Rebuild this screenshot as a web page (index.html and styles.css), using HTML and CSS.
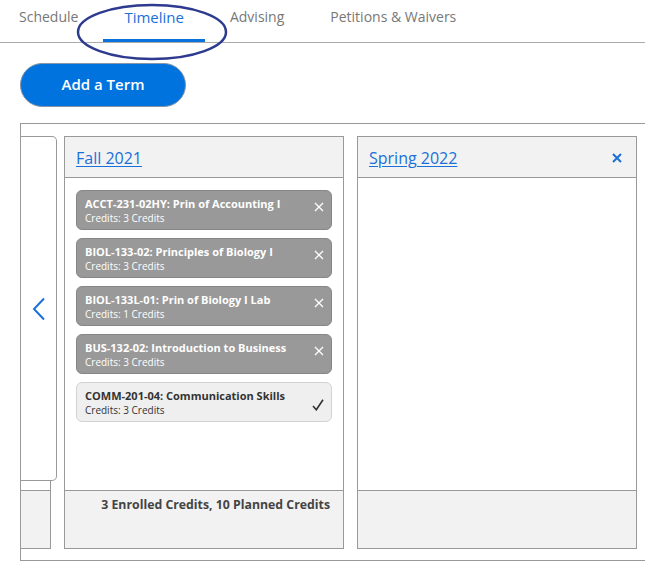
FILE: index.html
```html
<!DOCTYPE html>
<html lang="en">
<head>
    <meta charset="UTF-8">
    <meta name="viewport" content="width=device-width, initial-scale=1.0">
    <title>Timeline</title>
    <link rel="stylesheet" href="styles.css">
</head>
<body>

    <nav class="tabs">
        <a class="tab">Schedule</a>
        <a class="tab active">Timeline</a>
        <a class="tab">Advising</a>
        <a class="tab">Petitions &amp; Waivers</a>
    </nav>

    <!-- hand drawn circle around the active tab -->
    <svg class="mark" width="152" height="58" viewBox="0 0 152 58">
        <ellipse cx="76" cy="29" rx="74" ry="27" fill="none" stroke="#2d3a8f" stroke-width="2.5"/>
    </svg>

    <div class="content">
        <button class="add-term">Add a Term</button>

        <div class="timeline">
            <button class="prev-nav" aria-label="Previous term">
                <svg width="14" height="24" viewBox="0 0 14 24">
                    <path d="M12 1.5 L2 12 L12 22.5" fill="none" stroke="#1a70d9" stroke-width="2"/>
                </svg>
            </button>

            <div class="track">
                <section class="term">
                    <header class="term-head"></header>
                    <div class="term-body"></div>
                    <footer class="term-foot"></footer>
                </section>

                <section class="term">
                    <header class="term-head">
                        <a class="term-link">Fall 2021</a>
                    </header>
                    <div class="term-body">
                        <div class="course planned">
                            <div class="course-text">
                                <p class="course-title">ACCT-231-02HY: Prin of Accounting I</p>
                                <p class="course-credits">Credits: 3 Credits</p>
                            </div>
                            <svg class="course-x" width="10" height="10" viewBox="0 0 10 10"><path d="M1 1 L9 9 M9 1 L1 9" stroke="#fff" stroke-width="1.3"/></svg>
                        </div>
                        <div class="course planned">
                            <div class="course-text">
                                <p class="course-title">BIOL-133-02: Principles of Biology I</p>
                                <p class="course-credits">Credits: 3 Credits</p>
                            </div>
                            <svg class="course-x" width="10" height="10" viewBox="0 0 10 10"><path d="M1 1 L9 9 M9 1 L1 9" stroke="#fff" stroke-width="1.3"/></svg>
                        </div>
                        <div class="course planned">
                            <div class="course-text">
                                <p class="course-title">BIOL-133L-01: Prin of Biology I Lab</p>
                                <p class="course-credits">Credits: 1 Credits</p>
                            </div>
                            <svg class="course-x" width="10" height="10" viewBox="0 0 10 10"><path d="M1 1 L9 9 M9 1 L1 9" stroke="#fff" stroke-width="1.3"/></svg>
                        </div>
                        <div class="course planned">
                            <div class="course-text">
                                <p class="course-title">BUS-132-02: Introduction to Business</p>
                                <p class="course-credits">Credits: 3 Credits</p>
                            </div>
                            <svg class="course-x" width="10" height="10" viewBox="0 0 10 10"><path d="M1 1 L9 9 M9 1 L1 9" stroke="#fff" stroke-width="1.3"/></svg>
                        </div>
                        <div class="course enrolled">
                            <div class="course-text">
                                <p class="course-title">COMM-201-04: Communication Skills</p>
                                <p class="course-credits">Credits: 3 Credits</p>
                            </div>
                            <svg class="course-check" width="12" height="12" viewBox="0 0 12 12"><path d="M1 7 L4.3 10.8 L11 0.8" fill="none" stroke="#333" stroke-width="1.6"/></svg>
                        </div>
                    </div>
                    <footer class="term-foot">3 Enrolled Credits, 10 Planned Credits</footer>
                </section>

                <section class="term">
                    <header class="term-head">
                        <a class="term-link">Spring 2022</a>
                        <svg class="term-x" width="10" height="10" viewBox="0 0 10 10"><path d="M1 1 L9 9 M9 1 L1 9" stroke="#1a70d9" stroke-width="2"/></svg>
                    </header>
                    <div class="term-body"></div>
                    <footer class="term-foot"></footer>
                </section>
            </div>
        </div>
    </div>

</body>
</html>
```

FILE: styles.css
```css
*{
    padding: 0;
    margin: 0;
    box-sizing: border-box;
}

body{
    background-color: #fff;
    font-family: "Open Sans", "DejaVu Sans", sans-serif;
    color: #333;
    overflow: hidden;
}

/* tabs */
.tabs{
    display: flex;
    gap: 4px;
    height: 43px;
    margin-left: -2px;
    border-bottom: 1px solid #aaa;
}

.tab{
    display: block;
    height: 42px;
    padding: 7px 21px 0;
    font-size: 14px;
    line-height: 20px;
    color: #777;
    border-bottom: 3px solid transparent;
}

.tab.active{
    font-size: 15px;
    color: #1a70d9;
    border-bottom-color: #0a72dc;
}

.mark{
    position: absolute;
    left: 76px;
    top: 3px;
}

.content{
    padding-left: 20px;
}

.add-term{
    display: block;
    width: 166px;
    height: 44px;
    margin-top: 20px;
    padding-bottom: 2px;
    border: 1px solid #8795a6;
    border-radius: 22px;
    background-color: #0073de;
    color: #fff;
    font-family: inherit;
    font-size: 15px;
    font-weight: 600;
}

/* timeline board */
.timeline{
    position: relative;
    margin-top: 16px;
    margin-right: -30px;
    padding: 12px 0 11px;
    border: 1px solid #999;
    border-right: none;
    overflow: hidden;
}

.track{
    display: flex;
    gap: 13px;
    margin-left: -250px;
}

.term{
    flex: 0 0 280px;
    height: 413px;
    display: flex;
    flex-direction: column;
    border: 1px solid #999;
}

.term-head{
    height: 41px;
    display: flex;
    align-items: center;
    justify-content: space-between;
    padding: 2px 14px 0 11px;
    background-color: #f2f2f2;
    border-bottom: 1px solid #999;
}

.term-link{
    font-size: 16px;
    color: #1a70d9;
    text-decoration: underline;
    text-underline-offset: 2px;
}

.term-body{
    flex: 1;
    display: flex;
    flex-direction: column;
    gap: 8px;
    padding: 12px 11px;
}

.term-foot{
    height: 58px;
    padding: 6px 13px 0;
    background-color: #f2f2f2;
    border-top: 1px solid #999;
    text-align: right;
    font-size: 12.3px;
    font-weight: 700;
    line-height: 16px;
    color: #444;
}

/* course cards */
.course{
    display: flex;
    align-items: flex-start;
    justify-content: space-between;
    height: 40px;
    padding: 6px 7px 0 8px;
    border-radius: 6px;
}

.course.planned{
    background-color: #999;
    border: 1px solid #868686;
    color: #fff;
}

.course.enrolled{
    background-color: #efefef;
    border: 1px solid #d2d2d2;
    color: #333;
}

.course-title{
    font-size: 11px;
    font-weight: 700;
    line-height: 14px;
}

.course-credits{
    font-size: 10px;
    line-height: 14px;
}

.course-x{
    margin-top: 5px;
}

.course-check{
    margin-top: 10px;
}

/* previous term button laid over the cut off column */
.prev-nav{
    position: absolute;
    left: 0;
    top: 12px;
    width: 36px;
    height: 345px;
    display: flex;
    align-items: center;
    justify-content: center;
    background-color: #fff;
    border: 1px solid #999;
    border-left: none;
    border-radius: 0 5px 5px 0;
    z-index: 1;
}
```
